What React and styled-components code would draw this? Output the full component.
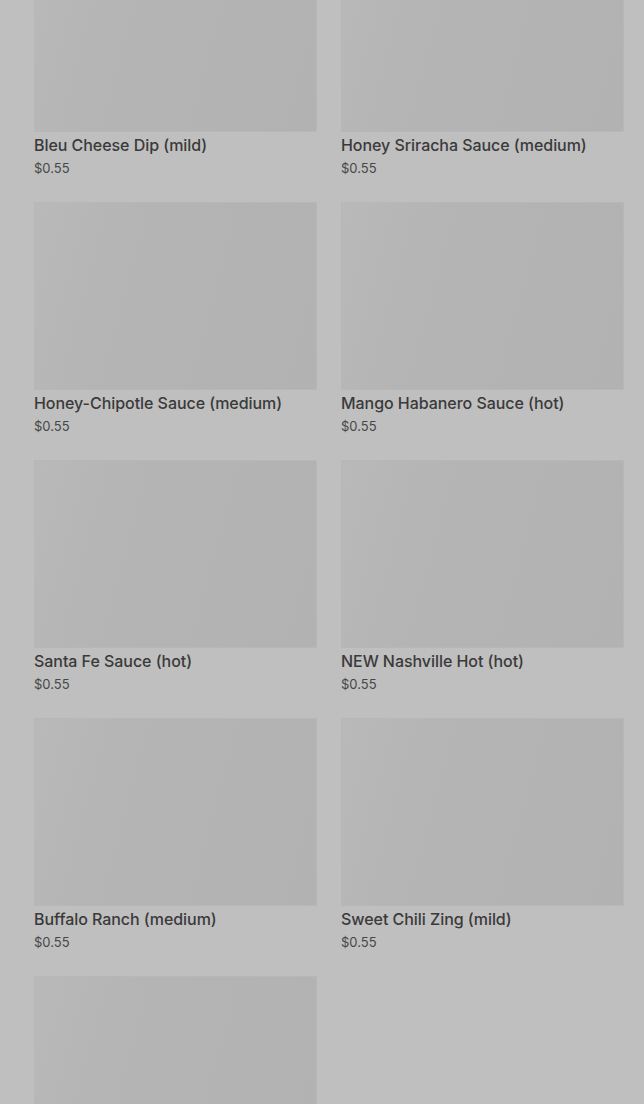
import styled, { createGlobalStyle } from "styled-components"

const GlobalStyle = createGlobalStyle`
  * {
    box-sizing: border-box;
  }
  html, body {
    margin: 0;
    padding: 0;
    background: #bfbfbf;
    overflow: hidden;
  }
  body {
    font-family: Inter, "Noto Sans", Arial, sans-serif;
    color: #3a3a3a;
  }
`

// last item is only partly in view, its text falls below the fold
const products = [
  { name: "Bleu Cheese Dip (mild)", price: "$0.55" },
  { name: "Honey Sriracha Sauce (medium)", price: "$0.55" },
  { name: "Honey-Chipotle Sauce (medium)", price: "$0.55" },
  { name: "Mango Habanero Sauce (hot)", price: "$0.55" },
  { name: "Santa Fe Sauce (hot)", price: "$0.55" },
  { name: "NEW Nashville Hot (hot)", price: "$0.55" },
  { name: "Buffalo Ranch (medium)", price: "$0.55" },
  { name: "Sweet Chili Zing (mild)", price: "$0.55" },
  { name: null, price: null },
]

const App = () => {
  return (
    <Page>
      <GlobalStyle />
      <Grid>
        {products.map((p, i) => (
          <Card key={i}>
            <Thumb />
            {p.name && <Title>{p.name}</Title>}
            {p.price && <Price>{p.price}</Price>}
          </Card>
        ))}
      </Grid>
    </Page>
  )
}

const Page = styled.div`
  width: 644px;
  height: 1104px;
  overflow: hidden;
  padding: 0 20px 0 34px;
`

const Grid = styled.div`
  display: grid;
  grid-template-columns: repeat(2, 283px);
  column-gap: 24px;
  row-gap: 24px;
  margin-top: -56px;
`

const Card = styled.div`
  display: flex;
  flex-direction: column;
`

const Thumb = styled.div`
  height: 188px;
  background: linear-gradient(105deg, #b9b9b9 0%, #b4b4b4 35%, #b2b2b2 100%);
  box-shadow: inset 0 0 0 1px #b7b7b7;
`

const Title = styled.div`
  margin-top: 2px;
  font-size: 16px;
  line-height: 22px;
  font-weight: 500;
  letter-spacing: -0.05px;
  color: #3a3a3a;
`

const Price = styled.div`
  margin-top: 2px;
  font-size: 13px;
  line-height: 20px;
  color: #474747;
`

export default App
